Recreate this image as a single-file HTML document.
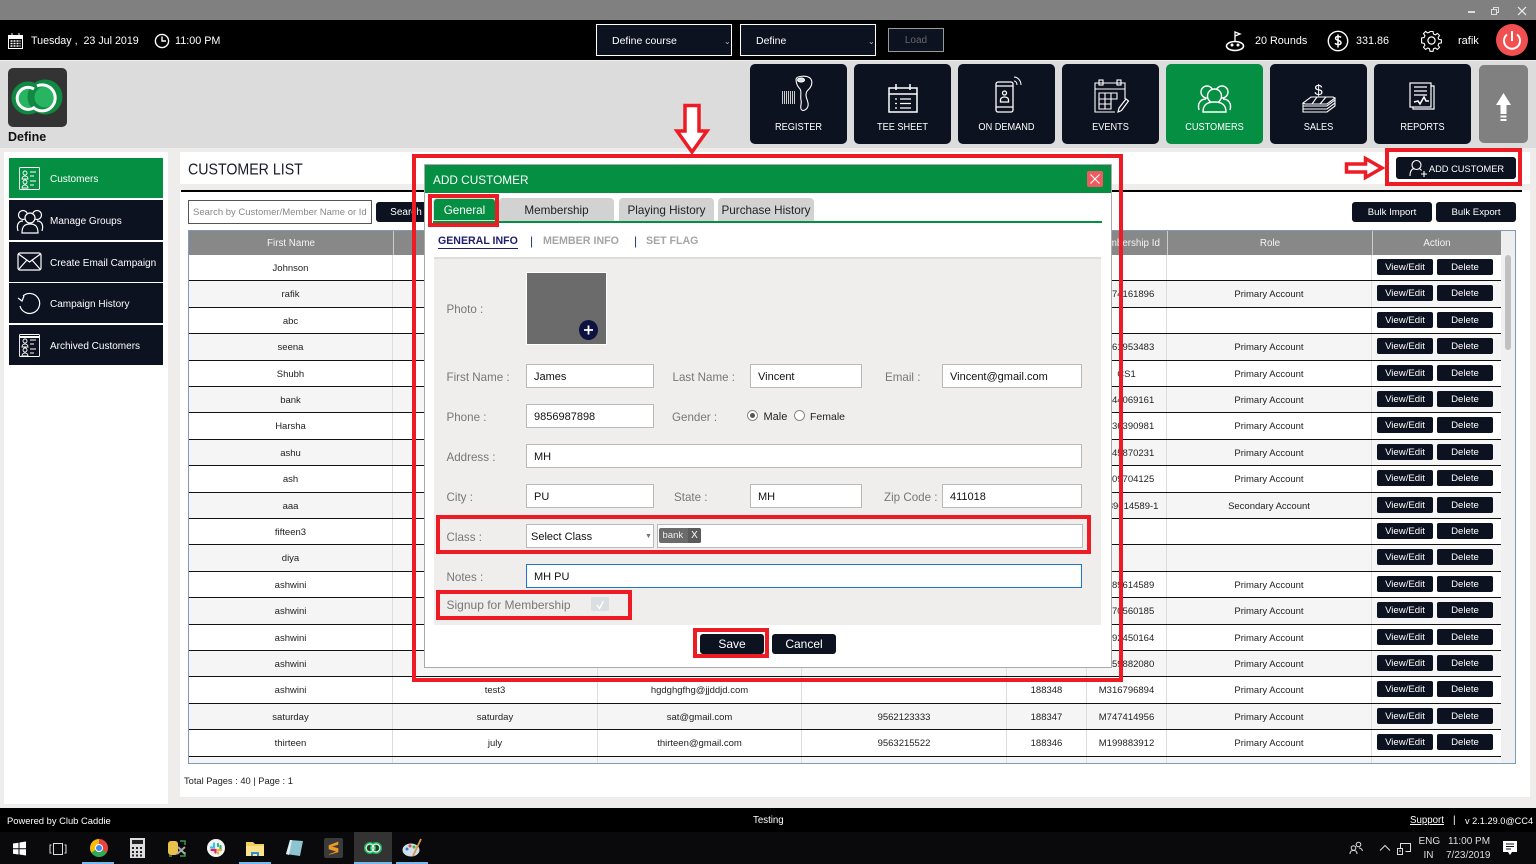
<!DOCTYPE html>
<html><head><meta charset="utf-8"><title>Customer List</title>
<style>
*{box-sizing:border-box}
html,body{margin:0;padding:0}
body{width:1536px;height:864px;overflow:hidden;position:relative;background:#eeedeb;font-family:"Liberation Sans","DejaVu Sans",sans-serif;font-size:11px;color:#222}
.a,.t,.r,.nav,.side,.btn,.inp,.lbl,.red{position:absolute}
.t{white-space:nowrap;line-height:14px}
.nav{top:64px;width:97px;height:80px;background:#0d1220;border-radius:5px;color:#fff;font-size:9.200px;text-align:center}
.nav span{position:absolute;left:0;right:0;top:57px;line-height:13px;transform:scaleY(1.1)}
.nav svg{position:absolute;left:0;top:0}
.side{left:9px;width:154px;height:40px;background:#0d1220;color:#fff;font-size:10px;line-height:44px;padding-left:41px;white-space:nowrap}
.side svg{position:absolute;left:0;top:0}
.btn{background:#0d1220;color:#fff;text-align:center;border-radius:3px;white-space:nowrap}
.r{left:0;width:1312px;height:26.4px;display:grid;grid-template-columns:204px 205px 204px 205px 80px 80px 205px 129px;background:#fff;border-bottom:1px solid #111;font-size:9.500px;color:#222}
.r.e{background:#f5f5f5}
.r i{font-style:normal;text-align:center;line-height:27px;border-right:1px solid #ddd;white-space:nowrap;overflow:hidden}
.r i:last-child{border:0;position:relative}
.r b{position:absolute;top:4px;height:16px;width:56px;background:#0d1220;color:#fff;font-weight:normal;border-radius:2px;line-height:18px;font-size:9.600px;text-align:center}
.r b:first-child{left:5px}
.r b+b{left:65px}
.h{position:absolute;top:231px;height:24px;background:#888;color:#f4f4f4;font-size:9.800px;text-align:center;line-height:25px;border-right:1px solid #ccc}
.inp{background:#fff;border:1px solid #b9b9b9;height:24px;font-size:11px;line-height:24px;padding-left:7px;color:#111;white-space:nowrap}
.lbl{color:#777;font-size:11.600px;line-height:14px;white-space:nowrap;margin-top:1px}
.red{border:4px solid #ed1c24}
.tab{position:absolute;top:198px;height:23px;background:#d2d2d2;border-radius:4px 4px 0 0;font-size:11.700px;line-height:26px;text-align:center;color:#222;white-space:nowrap}
</style></head><body>

<!-- title bar -->
<div class="a" style="left:0;top:0;width:1536px;height:20px;background:#808080"></div>
<div class="a" style="left:1468px;top:11px;width:7px;height:2px;background:#ddd"></div>
<svg class="a" style="left:1490px;top:6px" width="11" height="10"><path d="M1.500 3.500h5v5h-5zM3.500 3.500v-2h5v5h-2" fill="none" stroke="#ddd"/></svg>
<svg class="a" style="left:1517px;top:6px" width="11" height="10"><path d="M1 1l8 8M9 1l-8 8" stroke="#eee" stroke-width="1.200"/></svg>

<!-- top black bar -->
<div class="a" style="left:0;top:20px;width:1536px;height:40px;background:#000"></div>
<svg class="a" style="left:7px;top:32px" width="18" height="18" fill="none" stroke="#fff"><rect x="1.500" y="3.500" width="14" height="13"/><path d="M5 1v4M12 1v4"/><rect x="1.500" y="3.500" width="14" height="3" fill="#fff"/><path d="M3.500 9h10M3.500 11.500h10M3.500 14h10" stroke-dasharray="2 1" stroke-width="1.500"/></svg>
<div class="t" style="left:31px;top:34px;color:#fff;font-size:10.700px">Tuesday ,&nbsp; 23 Jul 2019</div>
<svg class="a" style="left:154px;top:33px" width="16" height="16" fill="none" stroke="#fff" stroke-width="1.400"><circle cx="8" cy="8" r="6.600"/><path d="M8 3.500V8h4"/></svg>
<div class="t" style="left:175px;top:34px;color:#fff;font-size:10.800px">11:00 PM</div>

<div class="a" style="left:596px;top:24px;width:136px;height:32px;background:#0d1220;border:1px solid #fff"></div>
<div class="t" style="left:612px;top:34px;color:#fff;font-size:10.500px">Define course</div>
<div class="t" style="left:724px;top:35px;color:#bbb;font-size:8px">&#8964;</div>
<div class="a" style="left:740px;top:24px;width:136px;height:32px;background:#0d1220;border:1px solid #fff"></div>
<div class="t" style="left:756px;top:34px;color:#fff;font-size:10.500px">Define</div>
<div class="t" style="left:868px;top:35px;color:#bbb;font-size:8px">&#8964;</div>
<div class="a" style="left:888px;top:28px;width:56px;height:24px;background:#0d1220;border:1px solid #999;color:#666;font-size:10px;text-align:center;line-height:24px">Load</div>

<svg class="a" style="left:1224px;top:30px" width="24" height="22" fill="none" stroke="#fff"><path d="M11 12V2l5 2-5 2" stroke-width="1.300"/><ellipse cx="11" cy="16" rx="8.500" ry="4.500" stroke-width="1.600"/><circle cx="8" cy="15" r="1" fill="#fff"/><circle cx="14" cy="15" r="1" fill="#fff"/></svg>
<div class="t" style="left:1255px;top:34px;color:#fff;font-size:10.800px">20 Rounds</div>
<svg class="a" style="left:1327px;top:30px" width="22" height="22" fill="none" stroke="#fff"><circle cx="11" cy="11" r="9.700" stroke-width="1.400"/><path d="M14 7.500c-1-1.300-5.500-1.600-5.500.8 0 2.700 5.500 1.500 5.500 4.400 0 2.400-4.600 2.200-6 .6M11 4.500v13" stroke-width="1.500"/></svg>
<div class="t" style="left:1356px;top:34px;color:#fff;font-size:10.800px">331.86</div>
<svg class="a" style="left:1420px;top:29px" width="23" height="23" fill="none" stroke="#fff" stroke-width="1.200"><circle cx="11.500" cy="11.500" r="3.600"/><path d="M9.800 1.500h3.400l.5 2.800 2 .9 2.400-1.600 2.300 2.400-1.600 2.300.9 2 2.800.5v3.400l-2.800.5-.9 2 1.600 2.400-2.400 2.300-2.300-1.600-2 .9-.5 2.800H9.800l-.5-2.800-2-.9-2.400 1.600-2.300-2.400 1.600-2.300-.9-2-2.800-.5V8.700l2.800-.5.900-2-1.600-2.400 2.400-2.300 2.300 1.600 2-.9z" transform="translate(1.150 1.150) scale(.9)"/></svg>
<div class="t" style="left:1458px;top:34px;color:#fff;font-size:11px">rafik</div>
<div class="a" style="left:1496px;top:24px;width:32px;height:32px;border-radius:50%;background:#f25050"></div>
<svg class="a" style="left:1496px;top:24px" width="32" height="32" fill="none" stroke="#fff" stroke-width="2"><path d="M16 7v10M11 10.500a8 8 0 1 0 10 0"/></svg>

<!-- grey header band -->
<div class="a" style="left:0;top:60px;width:1536px;height:88px;background:#dcdcdc;border-top:1px solid #eee"></div>
<div class="a" style="left:8px;top:68px;width:59px;height:59px;background:#333;border-radius:5px"></div>
<svg class="a" style="left:8px;top:68px" width="59" height="59" fill="none">
<circle cx="20" cy="30" r="13" fill="#27b562" stroke="#108a42" stroke-width="7"/>
<circle cx="37" cy="29" r="14" fill="#27b562" stroke="#108a42" stroke-width="7"/>
<path d="M26 21a11 11 0 1 0 1 18" stroke="#fff" stroke-width="3"/>
<path d="M29 18a13 13 0 1 1-3 22" stroke="#fff" stroke-width="3"/>
</svg>
<div class="t" style="left:8px;top:130px;font-size:12.500px;font-weight:bold;color:#111">Define</div>

<!-- nav tiles -->
<div class="nav" style="left:750px"><svg width="97" height="57" fill="none" stroke="#fff" stroke-width="1.100"><path d="M46 15c1-3 10-4 14-1 3 3 2 8-1 11-2 2-3 3-3 6 0 4 3 7 2 11-1 4-6 6-7 3-1-3 1-6 0-9-1-4 1-8-1-11-2-2-4-5-4-10z"/><ellipse cx="51" cy="16" rx="3.500" ry="2" fill="#ddd"/><path d="M32.500 27v13M34.500 27v13M36.500 27v13M38.500 27v13M40.500 27v13M42.500 27v13M44.500 27v13" stroke="#ccc" stroke-width="1"/></svg><span>REGISTER</span></div>
<div class="nav" style="left:854px"><svg width="97" height="57" fill="none" stroke="#fff" stroke-width="1.500"><rect x="35" y="24" width="28" height="24"/><path d="M35 30h28M42 20v6M56 20v6"/><path d="M41 35h2M46 35h11M41 39.500h2M46 39.500h11M41 44h2M46 44h11" stroke-width="1.300"/></svg><span>TEE SHEET</span></div>
<div class="nav" style="left:958px"><svg width="97" height="57" fill="none" stroke="#fff" stroke-width="1.300"><rect x="38" y="18" width="17" height="30" rx="2"/><path d="M38 22h17M38 43h17"/><circle cx="46.500" cy="29" r="2"/><path d="M42.500 38v-2c0-4 8-4 8 0v2z"/><path d="M56 17c2 0 3 2 3 4M56 13c4 0 7 4 7 8" stroke-width="1"/></svg><span>ON DEMAND</span></div>
<div class="nav" style="left:1062px"><svg width="97" height="57" fill="none" stroke="#fff" stroke-width="1.100"><path d="M63 35V19H33v29h20"/><path d="M33 25h30"/><rect x="37" y="16" width="4" height="5"/><rect x="55" y="16" width="4" height="5"/><path d="M37 29h18v6h-6v10H37zM37 35h18M37 40h12M43 29v16M49 29v6"/><path d="M57 44l7-9 2.500 2-7 9.500-3.500 1.500z" stroke-width="1.200"/></svg><span>EVENTS</span></div>
<div class="nav" style="left:1166px;background:#048f43"><svg width="97" height="57" fill="none" stroke="#fff" stroke-width="1.400"><circle cx="41" cy="28" r="6"/><circle cx="56" cy="28" r="6"/><circle cx="48.500" cy="32" r="7" fill="#048f43"/><path d="M33 46c-2-7 2-11 7-11M64 46c2-7-2-11-7-11"/><path d="M37 48c0-8 5-10 11.500-10S60 40 60 48z" fill="#048f43"/></svg><span>CUSTOMERS</span></div>
<div class="nav" style="left:1270px"><svg width="97" height="57" fill="none" stroke="#fff" stroke-width="1.100"><text x="48.500" y="31" fill="#fff" stroke="none" font-size="15" text-anchor="middle">$</text><path d="M41 33h22l2 1-8 6H35l-2-1z"/><path d="M33 39v3h24l8-6v-2M33 42v3h24l8-6v-3M33 45v3h24l8-6v-3M47 33l-5 7M56 33l-6 7"/></svg><span>SALES</span></div>
<div class="nav" style="left:1374px"><svg width="97" height="57" fill="none" stroke="#fff" stroke-width="1.200"><rect x="36" y="19" width="21" height="24"/><path d="M57 22h3v23H39v-2M40 23h13M40 27h13M40 31h13"/><path d="M40 38l4-1 2 3 4-7 2 4h3" stroke-width="1.500"/></svg><span>REPORTS</span></div>
<div class="a" style="left:1479px;top:65px;width:49px;height:78px;background:#808080;border-radius:5px"></div>
<svg class="a" style="left:1479px;top:65px" width="49" height="78" fill="#fff"><path d="M24.500 28L32 40h-4.500v9h-6v-9H17z"/><rect x="21.500" y="50.500" width="6" height="2"/><rect x="21.500" y="54" width="6" height="2"/></svg>

<!-- left panel -->
<div class="a" style="left:4px;top:152px;width:164px;height:652px;background:#fff"></div>
<div class="side" style="top:158px;background:#048f43"><svg width="40" height="40" fill="none" stroke="#fff" stroke-width=".9"><rect x="10.500" y="9.500" width="20" height="22" rx="1"/><circle cx="16" cy="15" r="2"/><path d="M13 21c0-4 6-4 6 0z"/><circle cx="16" cy="24" r="2"/><path d="M13 30c0-4 6-4 6 0z"/><path d="M21 14h6M21 18h4M21 23h6M21 27h4"/></svg>Customers</div>
<div class="side" style="top:200px"><svg width="40" height="40" fill="none" stroke="#fff" stroke-width="1.200"><circle cx="14" cy="15" r="4.500"/><circle cx="28" cy="15" r="4.500"/><circle cx="21" cy="18" r="5" fill="#0d1220"/><path d="M9 31c-2-7 1-10 5-10M33 31c2-7-1-10-5-10"/><path d="M13 33c0-7 3-9 8-9s8 2 8 9z" fill="#0d1220"/></svg>Manage Groups</div>
<div class="side" style="top:241.500px"><svg width="40" height="40" fill="none" stroke="#fff" stroke-width="1.200"><rect x="9" y="11" width="23" height="17" rx="2"/><path d="M9.500 12l11 8 11-8M10 27l8-9M31 27l-8-9"/></svg>Create Email Campaign</div>
<div class="side" style="top:283px"><svg width="40" height="40" fill="none" stroke="#fff" stroke-width="1.200"><path d="M14 13a10 10 0 1 1-3 10"/><path d="M10 17l4 3 2-5" transform="translate(-1 -2)"/></svg>Campaign History</div>
<div class="side" style="top:325px"><svg width="40" height="40" fill="none" stroke="#fff" stroke-width=".9"><rect x="10.500" y="9.500" width="20" height="22" rx="1"/><path d="M10.500 12h20" stroke-width="2"/><circle cx="16" cy="16" r="2"/><path d="M13 22c0-4 6-4 6 0z"/><circle cx="16" cy="25" r="2"/><path d="M13 31c0-4 6-4 6 0z"/><path d="M21 15h6M21 19h4M21 24h6M21 28h4"/></svg>Archived Customers</div>

<!-- main panel -->
<div class="a" style="left:180px;top:152px;width:1350px;height:645px;background:#fff"></div>
<div class="a" style="left:180px;top:184px;width:1350px;height:6px;background:#eeedeb"></div>
<div class="a" style="left:181px;top:190px;width:1341px;height:2px;background:#000"></div>
<div class="t" style="left:188px;top:161px;font-size:14.200px;line-height:18px;color:#1a1a2a;transform-origin:left center;transform:scaleY(1.1)">CUSTOMER LIST</div>
<div class="btn" style="left:1396px;top:157px;width:120px;height:22px;font-size:9.300px;line-height:24px;padding-left:21px">ADD CUSTOMER</div>
<svg class="a" style="left:1408px;top:158px" width="20" height="20" fill="none" stroke="#fff" stroke-width="1.100"><circle cx="8.500" cy="7" r="4.500"/><path d="M2 18c0-5 2-7 4-7.500M11 10.500c1 .3 2 1 2.500 2M13 16h6M16 13v6"/></svg>

<div class="a" style="left:188px;top:200px;width:184px;height:24px;background:#fff;border:1px solid #555;color:#888;font-size:9.500px;line-height:23px;padding-left:4px;white-space:nowrap;overflow:hidden">Search by Customer/Member Name or Id</div>
<div class="btn" style="left:376px;top:202px;width:60px;height:20px;font-size:10px;line-height:21px">Search</div>
<div class="btn" style="left:1352px;top:202px;width:80px;height:20px;font-size:9.600px;line-height:21px">Bulk Import</div>
<div class="btn" style="left:1436px;top:202px;width:80px;height:20px;font-size:9.600px;line-height:21px">Bulk Export</div>

<!-- table -->
<div class="a" style="left:188px;top:230px;width:1328px;height:534px;border:1px solid #7e9abc;background:#eee"></div>
<div class="h" style="left:189px;width:205px">First Name</div>
<div class="h" style="left:394px;width:205px">Last Name</div>
<div class="h" style="left:599px;width:204px">Email</div>
<div class="h" style="left:803px;width:205px">Phone</div>
<div class="h" style="left:1008px;width:80px">Id</div>
<div class="h" style="left:1088px;width:80px">Membership Id</div>
<div class="h" style="left:1168px;width:205px">Role</div>
<div class="h" style="left:1373px;width:128px;border:0">Action</div>
<div class="a" style="left:189px;top:255px;width:1326px;height:508px;overflow:hidden">
<div class="r" style="top:0"><i>Johnson</i><i></i><i></i><i></i><i></i><i></i><i></i><i><b>View/Edit</b><b>Delete</b></i></div>
<div class="r e" style="top:26.400px"><i>rafik</i><i></i><i></i><i></i><i></i><i>M574161896</i><i>Primary Account</i><i><b>View/Edit</b><b>Delete</b></i></div>
<div class="r" style="top:52.800px"><i>abc</i><i></i><i></i><i></i><i></i><i></i><i></i><i><b>View/Edit</b><b>Delete</b></i></div>
<div class="r e" style="top:79.200px"><i>seena</i><i></i><i></i><i></i><i></i><i>M161953483</i><i>Primary Account</i><i><b>View/Edit</b><b>Delete</b></i></div>
<div class="r" style="top:105.600px"><i>Shubh</i><i></i><i></i><i></i><i></i><i>CS1</i><i>Primary Account</i><i><b>View/Edit</b><b>Delete</b></i></div>
<div class="r e" style="top:132px"><i>bank</i><i></i><i></i><i></i><i></i><i>M344069161</i><i>Primary Account</i><i><b>View/Edit</b><b>Delete</b></i></div>
<div class="r" style="top:158.400px"><i>Harsha</i><i></i><i></i><i></i><i></i><i>M136390981</i><i>Primary Account</i><i><b>View/Edit</b><b>Delete</b></i></div>
<div class="r e" style="top:184.800px"><i>ashu</i><i></i><i></i><i></i><i></i><i>M345870231</i><i>Primary Account</i><i><b>View/Edit</b><b>Delete</b></i></div>
<div class="r" style="top:211.200px"><i>ash</i><i></i><i></i><i></i><i></i><i>M509704125</i><i>Primary Account</i><i><b>View/Edit</b><b>Delete</b></i></div>
<div class="r e" style="top:237.600px"><i>aaa</i><i></i><i></i><i></i><i></i><i>M389614589-1</i><i>Secondary Account</i><i><b>View/Edit</b><b>Delete</b></i></div>
<div class="r" style="top:264px"><i>fifteen3</i><i></i><i></i><i></i><i></i><i></i><i></i><i><b>View/Edit</b><b>Delete</b></i></div>
<div class="r e" style="top:290.400px"><i>diya</i><i></i><i></i><i></i><i></i><i></i><i></i><i><b>View/Edit</b><b>Delete</b></i></div>
<div class="r" style="top:316.800px"><i>ashwini</i><i></i><i></i><i></i><i></i><i>M389614589</i><i>Primary Account</i><i><b>View/Edit</b><b>Delete</b></i></div>
<div class="r e" style="top:343.200px"><i>ashwini</i><i></i><i></i><i></i><i></i><i>M770560185</i><i>Primary Account</i><i><b>View/Edit</b><b>Delete</b></i></div>
<div class="r" style="top:369.600px"><i>ashwini</i><i></i><i></i><i></i><i></i><i>M392450164</i><i>Primary Account</i><i><b>View/Edit</b><b>Delete</b></i></div>
<div class="r e" style="top:396px"><i>ashwini</i><i></i><i></i><i></i><i></i><i>M359882080</i><i>Primary Account</i><i><b>View/Edit</b><b>Delete</b></i></div>
<div class="r" style="top:422.400px"><i>ashwini</i><i>test3</i><i>hgdghgfhg@jjddjd.com</i><i></i><i>188348</i><i>M316796894</i><i>Primary Account</i><i><b>View/Edit</b><b>Delete</b></i></div>
<div class="r e" style="top:448.800px"><i>saturday</i><i>saturday</i><i>sat@gmail.com</i><i>9562123333</i><i>188347</i><i>M747414956</i><i>Primary Account</i><i><b>View/Edit</b><b>Delete</b></i></div>
<div class="r" style="top:475.200px"><i>thirteen</i><i>july</i><i>thirteen@gmail.com</i><i>9563215522</i><i>188346</i><i>M199883912</i><i>Primary Account</i><i><b>View/Edit</b><b>Delete</b></i></div>
<div class="r e" style="top:501.600px"><i></i><i></i><i></i><i></i><i></i><i></i><i></i><i></i></div>
<div class="a" style="left:1312px;top:0;width:14px;height:508px;background:#f0f0f0"></div>
<div class="a" style="left:1316px;top:0;width:6px;height:95px;background:#c0c0c0;border-radius:3px"></div>
</div>
<div class="t" style="left:184px;top:774px;font-size:9.300px;color:#222">Total Pages : 40 | Page : 1</div>

<!-- modal -->
<div class="a" style="left:424px;top:164px;width:688px;height:504px;background:#fff;border:1px solid #aaa"></div>
<div class="a" style="left:425px;top:165px;width:686px;height:28px;background:#048f43"></div>
<div class="t" style="left:433px;top:173px;color:#fff;font-size:11.800px">ADD CUSTOMER</div>
<div class="a" style="left:1087px;top:171px;width:16px;height:16px;background:#ef5a5f;border-radius:2px"></div>
<svg class="a" style="left:1087px;top:171px" width="16" height="16"><path d="M3.500 3.500l9 9M12.500 3.500l-9 9" stroke="#fff" stroke-width="1.100"/></svg>

<div class="tab" style="left:433px;width:63px;background:#048f43;color:#fff;border:1px solid #cfe6d8;line-height:24px">General</div>
<div class="tab" style="left:499px;width:115px">Membership</div>
<div class="tab" style="left:619px;width:95px">Playing History</div>
<div class="tab" style="left:718px;width:96px">Purchase History</div>
<div class="a" style="left:433px;top:221px;width:669px;height:1.500px;background:#048f43"></div>

<div class="t" style="left:438px;top:233.500px;font-size:10.600px;font-weight:bold;color:#1d1d6e;border-bottom:1px solid #1d1d6e;height:15px">GENERAL INFO</div>
<div class="t" style="left:530px;top:234px;font-size:12px;color:#1d3a6e">|</div>
<div class="t" style="left:543px;top:234px;font-size:10.700px;font-weight:bold;color:#a5a5a5">MEMBER INFO</div>
<div class="t" style="left:634px;top:234px;font-size:12px;color:#1d3a6e">|</div>
<div class="t" style="left:646px;top:234px;font-size:10.600px;font-weight:bold;color:#a5a5a5">SET FLAG</div>

<div class="a" style="left:434px;top:257px;width:667px;height:368px;background:#efeeec;border-top:2px solid #ddd"></div>
<div class="lbl" style="left:446.500px;top:302px">Photo :</div>
<div class="a" style="left:526px;top:271.500px;width:81px;height:73px;background:#6b6b6b;border:1px solid #fff"></div>
<div class="a" style="left:579px;top:320px;width:19px;height:20px;border-radius:50%;background:#0d1240"></div>
<svg class="a" style="left:579px;top:320px" width="19" height="20"><path d="M9.500 5.500v9M5 10h9" stroke="#fff" stroke-width="1.800"/></svg>

<div class="lbl" style="left:446.500px;top:370px">First Name :</div>
<div class="inp" style="left:526px;top:364px;width:128px">James</div>
<div class="lbl" style="left:672.500px;top:370px">Last Name :</div>
<div class="inp" style="left:750px;top:364px;width:112px">Vincent</div>
<div class="lbl" style="left:885px;top:370px">Email :</div>
<div class="inp" style="left:942px;top:364px;width:140px">Vincent@gmail.com</div>

<div class="lbl" style="left:446.500px;top:410px">Phone :</div>
<div class="inp" style="left:526px;top:404px;width:128px">9856987898</div>
<div class="lbl" style="left:672px;top:410px">Gender :</div>
<div class="a" style="left:747px;top:410px;width:11px;height:11px;border-radius:50%;border:1px solid #888;background:#fff"></div>
<div class="a" style="left:750px;top:413px;width:5px;height:5px;border-radius:50%;background:#555"></div>
<div class="t" style="left:763.500px;top:410px;font-size:11px;color:#222">Male</div>
<div class="a" style="left:794px;top:410px;width:11px;height:11px;border-radius:50%;border:1px solid #888;background:#fff"></div>
<div class="t" style="left:810px;top:410px;font-size:10.500px;color:#222">Female</div>

<div class="lbl" style="left:446.500px;top:450px">Address :</div>
<div class="inp" style="left:526px;top:444px;width:556px">MH</div>

<div class="lbl" style="left:446.500px;top:490px">City :</div>
<div class="inp" style="left:526px;top:484px;width:128px">PU</div>
<div class="lbl" style="left:674px;top:490px">State :</div>
<div class="inp" style="left:750px;top:484px;width:112px">MH</div>
<div class="lbl" style="left:884px;top:490px">Zip Code :</div>
<div class="inp" style="left:942px;top:484px;width:140px">411018</div>

<div class="lbl" style="left:446.500px;top:530px">Class :</div>
<div class="inp" style="left:526px;top:524px;width:128px;padding-left:4px;font-size:11px">Select Class</div>
<div class="t" style="left:645px;top:530px;font-size:7px;color:#777">&#9660;</div>
<div class="inp" style="left:656.500px;top:524px;width:426.500px"></div>
<div class="a" style="left:658.500px;top:528px;width:42px;height:15px;background:#6b6b6b;border-radius:2px;color:#eee;font-size:9.500px;line-height:15px;padding-left:4px">bank</div>
<div class="a" style="left:688px;top:528px;width:13px;height:15px;background:#5b5b5b;border-radius:0 2px 2px 0;color:#fff;font-size:10px;line-height:16px;text-align:center">X</div>

<div class="lbl" style="left:446.500px;top:570px">Notes :</div>
<div class="inp" style="left:526px;top:564px;width:556px;border-color:#1e78c8">MH PU</div>
<div class="lbl" style="left:446.500px;top:598px;font-size:12px;margin-top:0">Signup for Membership</div>
<div class="a" style="left:591px;top:597px;width:18px;height:14px;background:#dadfe2;border-radius:1px"></div>
<svg class="a" style="left:591px;top:597px" width="18" height="15"><path d="M6 8l2.500 3.500L12.500 4" fill="none" stroke="#fff" stroke-width="1.500"/></svg>

<div class="btn" style="left:700px;top:634px;width:64px;height:20px;font-size:12px;line-height:21px">Save</div>
<div class="btn" style="left:772px;top:634px;width:64px;height:20px;font-size:12px;line-height:21px">Cancel</div>

<!-- red annotations -->
<div class="red" style="left:411.500px;top:153.500px;width:711px;height:528px"></div>
<div class="red" style="left:427.500px;top:194px;width:71px;height:33px"></div>
<div class="red" style="left:436px;top:514.500px;width:655px;height:39px"></div>
<div class="red" style="left:436px;top:590px;width:196px;height:30px"></div>
<div class="red" style="left:693px;top:628px;width:76px;height:30px"></div>
<div class="red" style="left:1385px;top:148px;width:137px;height:38px"></div>
<svg class="a" style="left:670px;top:100px" width="44" height="56"><path d="M15 5.500h14V31h8L22 52 7 31h8z" fill="#fff" stroke="#ed1c24" stroke-width="3.500"/></svg>
<svg class="a" style="left:1343px;top:155px" width="44" height="26"><path d="M3.500 9h19V3.500L39 13 22.500 22.500V17h-19z" fill="#fff" stroke="#ed1c24" stroke-width="3.500"/></svg>

<!-- footer -->
<div class="a" style="left:0;top:808px;width:1536px;height:24px;background:#000"></div>
<div class="t" style="left:7px;top:814px;color:#fff;font-size:9.400px">Powered by Club Caddie</div>
<div class="t" style="left:753px;top:814px;color:#fff;font-size:9.700px">Testing</div>
<div class="t" style="left:1410px;top:814px;color:#fff;font-size:9.700px;text-decoration:underline">Support</div>
<div class="t" style="left:1453px;top:814px;color:#fff;font-size:10px">|</div>
<div class="t" style="left:1465px;top:814px;color:#fff;font-size:9.200px">v 2.1.29.0@CC4</div>

<!-- taskbar -->
<div class="a" style="left:0;top:832px;width:1536px;height:32px;background:#0a0a0c"></div>
<svg class="a" style="left:12px;top:841px" width="15" height="15" fill="#fff"><path d="M1 2.500l5.500-.8v5.500H1zM7.500 1.500L14 .5v6.700H7.500zM1 8.200h5.500v5.300L1 12.700zM7.500 8.200H14v6.300l-6.500-1z"/></svg>
<svg class="a" style="left:49px;top:842px" width="18" height="14" fill="none" stroke="#ddd"><rect x="4.500" y="1.500" width="9" height="11"/><path d="M2.500 3H1v8h1.500M15.500 3H17v8h-1.500"/></svg>
<div class="a" style="left:82px;top:862px;width:32px;height:2px;background:#76b9ed"></div>
<div class="a" style="left:89.500px;top:839px;width:18px;height:18px;border-radius:50%;background:conic-gradient(#e8453c 0 120deg,#34a853 120deg 240deg,#fbbc05 240deg 360deg)"></div>
<div class="a" style="left:94.500px;top:844px;width:8px;height:8px;border-radius:50%;background:#4285f4;border:1px solid #fff"></div>
<svg class="a" style="left:130px;top:838px" width="15" height="20"><rect width="15" height="20" fill="#ddd"/><rect x="2" y="2" width="11" height="4" fill="#222"/><path d="M2 9h2v2H2zM6 9h2v2H6zM10 9h2v2h-2zM2 13h2v2H2zM6 13h2v2H6zM10 13h2v2h-2zM2 16.500h2v2H2zM6 16.500h2v2H6zM10 16.500h2v2h-2z" fill="#222"/></svg>
<svg class="a" style="left:167px;top:839px" width="20" height="19"><rect x="1" y="2" width="10" height="14" rx="3" fill="#e8c24a"/><path d="M13 2h5v4M13 17h5v-4M2 17h3" stroke="#3a9a4a" fill="none" stroke-width="1.500"/><path d="M10 15l8-7M11 8l7 7" stroke="#aaa" stroke-width="2"/></svg>
<div class="a" style="left:207px;top:839px;width:18px;height:18px;border-radius:50%;background:#f4f4f4"></div>
<svg class="a" style="left:207px;top:839px" width="18" height="18" fill="none" stroke-width="2.200" stroke-linecap="round"><path d="M7 4.500v4H4" stroke="#36c5f0"/><path d="M13.500 7v4" stroke="#2eb67d"/><path d="M11 5v2" stroke="#2eb67d"/><path d="M4.500 11h4v2.500" stroke="#e01e5a"/><path d="M11 11h3" stroke="#ecb22e"/><path d="M11 13.500v1" stroke="#ecb22e"/></svg>
<div class="a" style="left:239px;top:862px;width:32px;height:2px;background:#76b9ed"></div>
<svg class="a" style="left:246px;top:841px" width="18" height="15"><path d="M0 1h7l2 2h9v12H0z" fill="#f3cf5e"/><rect x="0" y="5" width="18" height="10" fill="#ffe28a"/><path d="M5 15v-4h8v4h-2v-2H7v2z" fill="#2c8fd6"/></svg>
<svg class="a" style="left:285px;top:839px" width="18" height="19"><path d="M5 1l13 1-3 15-14-2z" fill="#8cc4cf"/><path d="M5 1l-4 14 3 1 3-15z" fill="#dfeff2"/></svg>
<div class="a" style="left:324px;top:838px;width:19px;height:20px;background:#3a3a3a;border-radius:2px"></div>
<svg class="a" style="left:324px;top:838px" width="19" height="20"><path d="M14 4L5 7.500v3.500l8 2.500-8 3 9-2.500v-3.500L7 8.500l7-2z" fill="#ee9a23" stroke="#ee9a23" stroke-width=".6"/></svg>
<div class="a" style="left:354px;top:832px;width:38px;height:32px;background:#333"></div>
<div class="a" style="left:354px;top:862px;width:38px;height:2px;background:#76b9ed"></div>
<svg class="a" style="left:364px;top:841px" width="18" height="14" fill="none"><circle cx="6" cy="7" r="4.500" stroke="#22b35c" stroke-width="3"/><circle cx="12" cy="7" r="4.500" stroke="#22b35c" stroke-width="3"/><circle cx="6" cy="7" r="4" stroke="#fff" stroke-width="1"/><circle cx="12" cy="7" r="4" stroke="#fff" stroke-width="1"/></svg>
<div class="a" style="left:396px;top:862px;width:32px;height:2px;background:#76b9ed"></div>
<svg class="a" style="left:402px;top:838px" width="20" height="20"><ellipse cx="9" cy="12" rx="8.500" ry="6.500" fill="#cfe0ea"/><circle cx="5" cy="11" r="1.500" fill="#3a7bd5"/><circle cx="8" cy="8" r="1.500" fill="#e04a3a"/><circle cx="12" cy="9" r="1.500" fill="#3fae4a"/><path d="M19 1l-8 17" stroke="#d9944a" stroke-width="1.800"/></svg>

<svg class="a" style="left:1349px;top:841px" width="14" height="14" fill="none" stroke="#ddd"><circle cx="4.500" cy="7" r="2.300"/><path d="M1 13c0-3 1.500-3.500 3.500-3.500S8 10 8 13"/><circle cx="9.500" cy="3.500" r="2.300"/><path d="M10 7c2 0 3 1 3.500 3"/></svg>
<svg class="a" style="left:1379px;top:844px" width="12" height="8" fill="none" stroke="#ddd"><path d="M1 6.500l5-5 5 5"/></svg>
<svg class="a" style="left:1397px;top:842px" width="15" height="13" fill="none" stroke="#ddd"><path d="M3.500 7V1.500h10v8h-5M.5 6.500h5v6h-5zM2 9h2"/></svg>
<div class="t" style="left:1418.500px;top:835px;color:#ddd;font-size:10px;width:20px;text-align:center">ENG</div>
<div class="t" style="left:1418.500px;top:849px;color:#ddd;font-size:10px;width:20px;text-align:center">IN</div>
<div class="t" style="left:1448px;top:835px;color:#ddd;font-size:10px;width:40px;text-align:center">11:00 PM</div>
<div class="t" style="left:1446px;top:849px;color:#ddd;font-size:10px;width:44px;text-align:center">7/23/2019</div>
<svg class="a" style="left:1503px;top:841px" width="14" height="15" fill="#fff"><path d="M0 0h14v11H9l-2 3-2-3H0z"/><path d="M3 3h8M3 5.500h8M3 8h5" stroke="#111"/></svg>
</body></html>
